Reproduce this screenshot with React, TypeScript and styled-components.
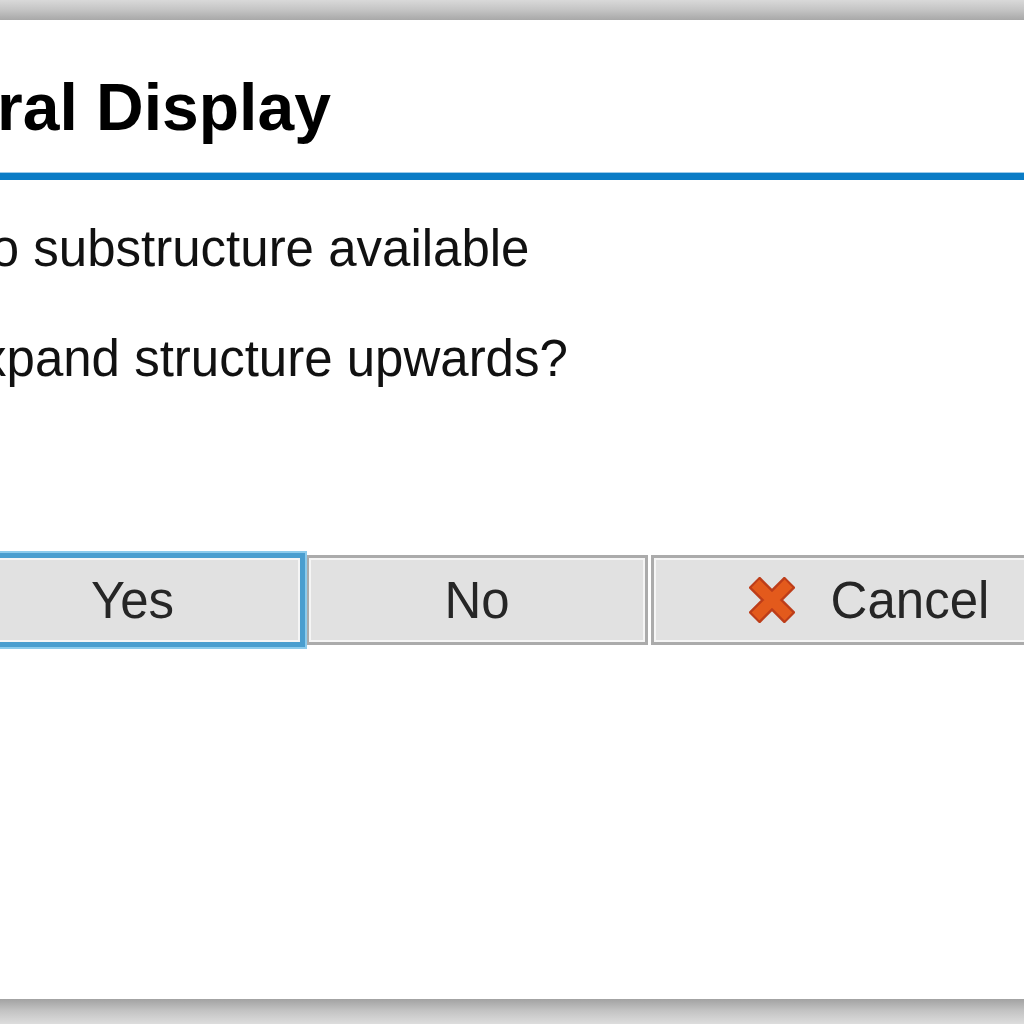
import React from "react";
import styled, { createGlobalStyle, css } from "styled-components";

const GlobalStyle = createGlobalStyle`
  html, body {
    margin: 0;
    padding: 0;
    overflow: hidden;
    background: #ffffff;
    font-family: "Liberation Sans", Arial, sans-serif;
  }
`;

const Screen = styled.div`
  width: 1024px;
  height: 1024px;
  display: flex;
  flex-direction: column;
  overflow: hidden;
`;

const TopShade = styled.div`
  height: 20px;
  flex: none;
  background: linear-gradient(to bottom, #d9d9d9 0%, #c4c4c4 50%, #a8a8a8 100%);
`;

const BottomShade = styled.div`
  height: 25px;
  flex: none;
  background: linear-gradient(to bottom, #a2a2a2 0%, #c2c2c2 45%, #dddddd 100%);
`;

const Dialog = styled.div`
  flex: 1;
  background: #ffffff;
  display: flex;
  flex-direction: column;
  overflow: hidden;
`;

const Header = styled.div`
  padding: 49px 0 28px;
`;

const Title = styled.h1`
  margin: 0 0 0 -234px;
  font-size: 66px;
  line-height: 76px;
  font-weight: 700;
  color: #000000;
  white-space: nowrap;
`;

const Rule = styled.div`
  height: 7px;
  flex: none;
  background: #0a7cc6;
  box-shadow: 0 -1px 0 #9ccbea;
`;

const Message = styled.div`
  padding-top: 39px;
  display: flex;
  flex-direction: column;
  gap: 50px;
`;

const Line = styled.p<{ $indent: number }>`
  margin: 0 0 0 ${(p) => p.$indent}px;
  font-size: 51px;
  line-height: 60px;
  color: #111111;
  white-space: nowrap;
`;

const ButtonRow = styled.div`
  margin: 166px 0 0 -38px;
  display: flex;
  gap: 3px;
`;

const Button = styled.button<{ $width: number; $focused?: boolean }>`
  flex: none;
  width: ${(p) => p.$width}px;
  height: 90px;
  box-sizing: border-box;
  border: 3px solid #ababab;
  background: #e1e1e1;
  box-shadow: inset 0 0 0 2px #f5f5f5;
  display: flex;
  align-items: center;
  justify-content: center;
  gap: 36px;
  padding: 0;
  font-family: "Liberation Sans", Arial, sans-serif;
  font-size: 51px;
  color: #262626;
  ${(p) =>
    p.$focused &&
    css`
      border-color: #4a9ecf;
      box-shadow: 0 0 0 2px #4a9ecf, 0 0 0 4px #8ccbec, inset 0 0 0 2px #f5f5f5;
      position: relative;
      z-index: 1;
    `}
`;

const CancelIcon = () => (
  <svg width="46" height="46" viewBox="0 0 46 46" aria-hidden="true">
    <g strokeLinecap="butt">
      <path d="M5 5 L41 41 M41 5 L5 41" stroke="#bd3d19" strokeWidth="16" />
      <path d="M6.5 6.5 L39.5 39.5 M39.5 6.5 L6.5 39.5" stroke="#e35a1c" strokeWidth="11" />
    </g>
  </svg>
);

export default function App() {
  return (
    <>
      <GlobalStyle />
      <Screen>
        <TopShade />
        <Dialog>
          <Header>
            <Title>Structural Display</Title>
          </Header>
          <Rule />
          <Message>
            <Line $indent={-46}>No substructure available</Line>
            <Line $indent={-53}>Expand structure upwards?</Line>
          </Message>
          <ButtonRow>
            <Button $width={341} $focused>
              Yes
            </Button>
            <Button $width={342}>No</Button>
            <Button $width={436}>
              <CancelIcon />
              <span>Cancel</span>
            </Button>
          </ButtonRow>
        </Dialog>
        <BottomShade />
      </Screen>
    </>
  );
}
